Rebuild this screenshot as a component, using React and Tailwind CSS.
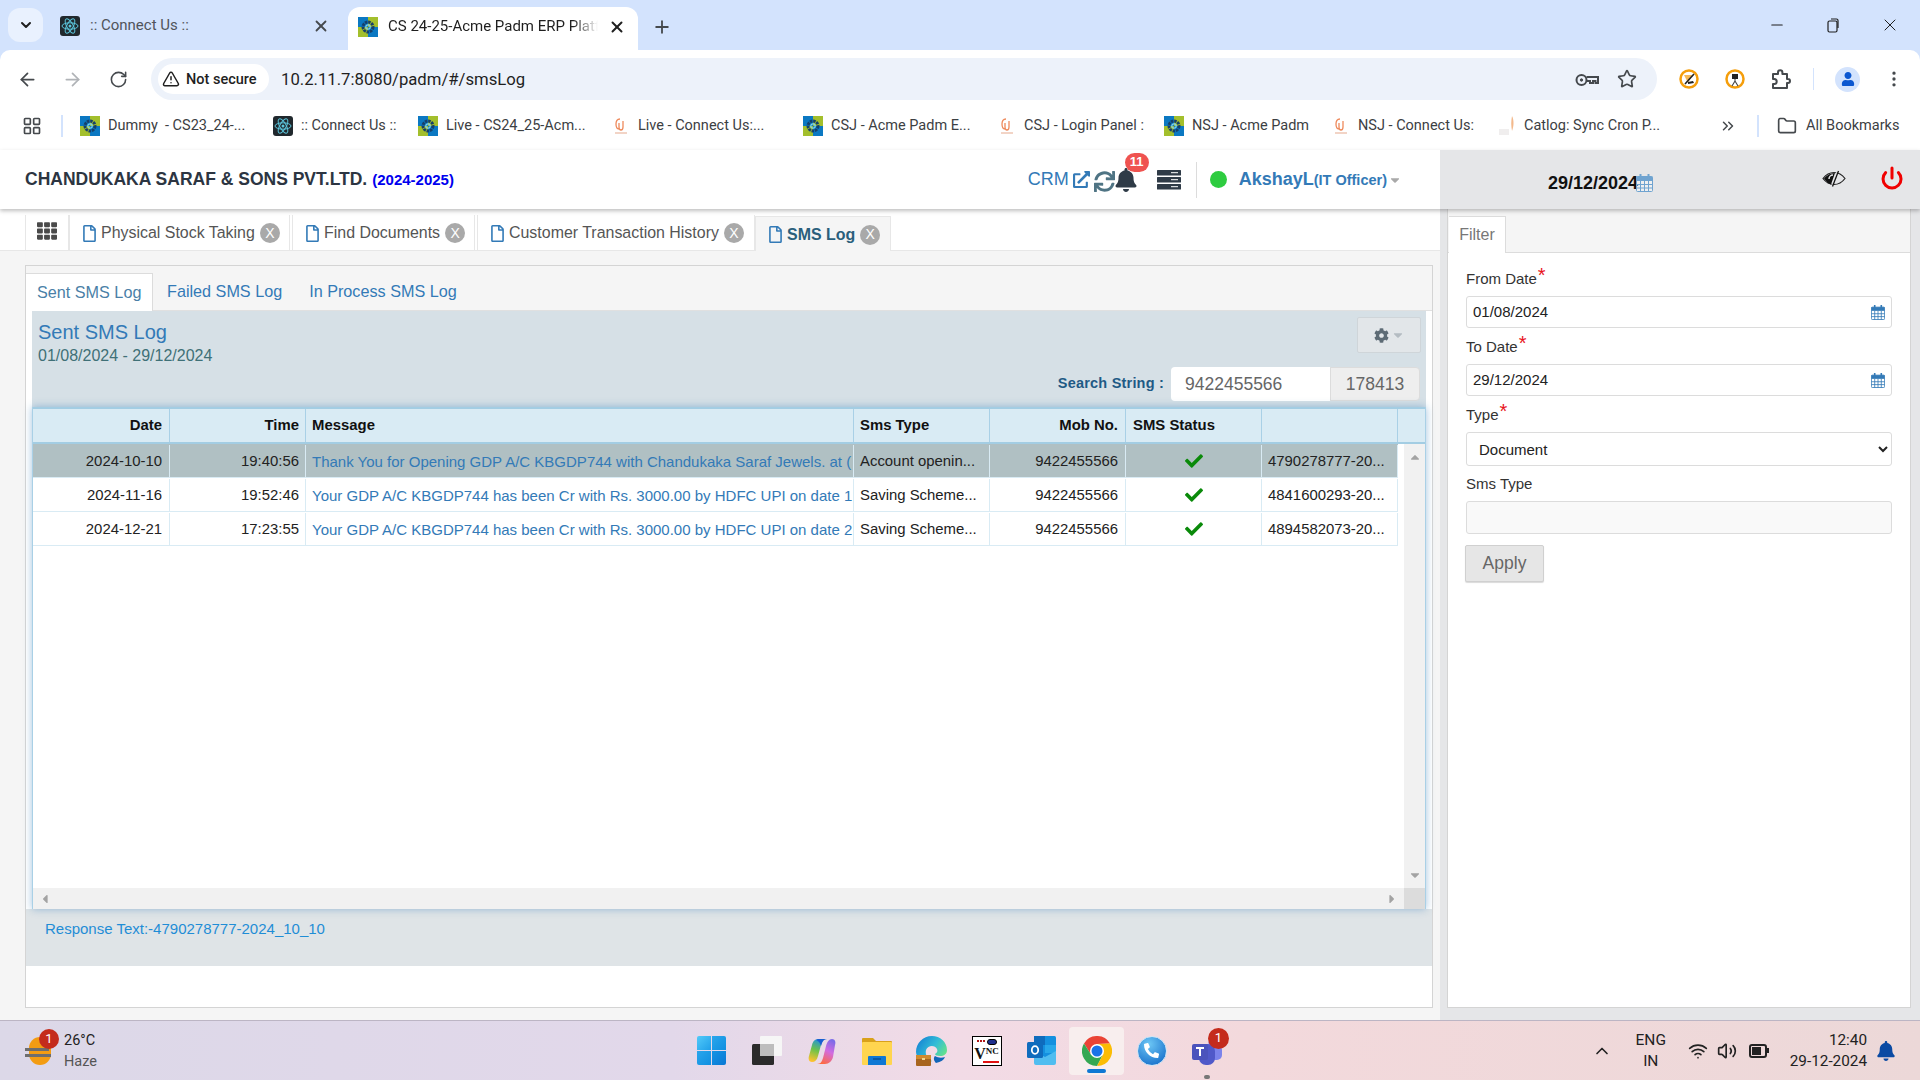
import { ArrowLeft, ArrowRight, RotateCw, X, Plus, ChevronDown, Star, MoreVertical, ChevronsRight, Folder, LayoutGrid, TriangleAlert, Minus, ChevronUp, Wifi, Volume2, Power } from 'lucide-react';
import { FaCheck, FaBell, FaSync, FaExternalLinkAlt, FaTh, FaCog, FaCaretDown, FaRegFile, FaCaretUp, FaCaretLeft, FaCaretRight, FaUser, FaPhoneAlt } from 'react-icons/fa';

function AcmeIcon() {
  return (
    <svg width="20" height="20" viewBox="0 0 20 20" className="shrink-0">
      <rect width="10" height="10" fill="#0b78c2" />
      <rect x="10" width="10" height="10" fill="#a3bf2c" />
      <rect y="10" width="10" height="10" fill="#a3bf2c" />
      <rect x="10" y="10" width="10" height="10" fill="#0b78c2" />
      <circle cx="10" cy="10" r="5" fill="none" stroke="#16406b" strokeWidth="3" strokeDasharray="2.5 0.8" />
      <circle cx="10" cy="10" r="2.2" fill="none" stroke="#7fd0e8" strokeWidth="1.2" />
    </svg>
  );
}

function AtomIcon() {
  return (
    <svg width="20" height="20" viewBox="0 0 20 20" className="shrink-0">
      <rect width="20" height="20" rx="3" fill="#20282d" />
      <g fill="none" stroke="#5cc6dc" strokeWidth="1">
        <ellipse cx="10" cy="10" rx="8" ry="3.2" />
        <ellipse cx="10" cy="10" rx="8" ry="3.2" transform="rotate(60 10 10)" />
        <ellipse cx="10" cy="10" rx="8" ry="3.2" transform="rotate(120 10 10)" />
      </g>
      <circle cx="10" cy="10" r="1.5" fill="#5cc6dc" />
    </svg>
  );
}

function CuIcon() {
  return (
    <svg width="18" height="20" viewBox="0 0 18 20" className="shrink-0">
      <path d="M8 3C5 3 4 5 4 8s1 5 3 5M11 5v6c0 2-1 3-2 3s-2-1-2-3V7" fill="none" stroke="#ee8a5c" strokeWidth="1.3" />
      <path d="M3 17h12" stroke="#e9b7a0" strokeWidth="1.2" />
    </svg>
  );
}

function CatlogIcon() {
  return (
    <svg width="18" height="22" viewBox="0 0 18 22" className="shrink-0">
      <path d="M14 1c2 4 2 10 0 15-1-5-1-10 0-15z" fill="#f3b98c" />
      <rect x="1" y="14" width="10" height="6" fill="#f0eeee" />
    </svg>
  );
}

function CalendarIcon({ color, size = 17 }) {
  return (
    <svg width={size} height={size + 1} viewBox="0 0 17 18" className="shrink-0">
      <rect x="0.5" y="2.5" width="16" height="15" rx="1" fill="#fff" fillOpacity="0.35" stroke={color} />
      <rect x="0.5" y="2.5" width="16" height="4.5" fill={color} />
      <path d="M4.5 0.5v4M12.5 0.5v4" stroke={color} strokeWidth="2" strokeLinecap="round" />
      <path d="M0.5 10.5h16M0.5 14h16M4.5 7v10.5M8.5 7v10.5M12.5 7v10.5" stroke={color} strokeWidth="1" />
    </svg>
  );
}

function Bookmark({ icon, label, className }) {
  return (
    <div className={`flex items-center gap-2 text-[14.5px] text-[#3c4043] whitespace-pre shrink-0 ${className}`}>
      {icon}
      <span>{label}</span>
    </div>
  );
}

function BrowserChrome() {
  return (
    <div className="bg-[#d3e3fd] shrink-0 font-['Roboto',sans-serif]">
      {/* tab strip */}
      <div className="h-[50px] flex items-end pl-2 relative">
        <div className="w-[35px] h-[34px] mb-2 rounded-[12px] bg-[#e9f1fe] flex items-center justify-center">
          <ChevronDown size={16} strokeWidth={3} className="text-[#1f1f1f]" />
        </div>
        <div className="w-[305px] h-[43px] flex items-center pl-[17px] pb-[6px] shrink-0">
          <AtomIcon />
          <span className="ml-[10px] text-[15px] text-[#50545a] flex-1">:: Connect Us ::</span>
          <X size={18} strokeWidth={2.4} className="text-[#45494d] mr-[18px]" />
        </div>
        <div className="w-[290px] h-[43px] bg-white rounded-t-[12px] flex items-center pl-[10px] pb-1 shrink-0">
          <AcmeIcon />
          <span className="ml-[10px] text-[15px] text-[#1f1f1f] w-[210px] whitespace-nowrap [mask-image:linear-gradient(90deg,#000_88%,transparent)]">CS 24-25-Acme Padm ERP Platf</span>
          <X size={18} strokeWidth={2.6} className="text-[#1f1f1f] ml-[10px]" />
        </div>
        <div className="h-[43px] flex items-center pb-1 ml-[14px]">
          <Plus size={20} strokeWidth={2.2} className="text-[#45494d]" />
        </div>
        <div className="ml-auto h-[50px] flex items-center pr-[20px] gap-[39px] text-[#1f1f1f]">
          <Minus size={18} strokeWidth={1.4} />
          <svg width="16" height="16" viewBox="0 0 16 16" fill="none" stroke="#1f1f1f" strokeWidth="1.2">
            <rect x="3" y="4" width="9" height="11" rx="1.5" />
            <path d="M6 2h5.5A1.5 1.5 0 0 1 13 3.5V11" />
          </svg>
          <X size={20} strokeWidth={1.2} />
        </div>
      </div>
      {/* toolbar */}
      <div className="h-[50px] bg-white rounded-t-[10px] flex items-center pt-[8px]">
        <ArrowLeft size={21} className="ml-[17px] text-[#45494d]" />
        <ArrowRight size={21} className="ml-[24px] text-[#b0b3b7]" />
        <RotateCw size={19} className="ml-[26px] text-[#45494d]" />
        <div className="ml-[23px] w-[1506px] h-[42px] rounded-full bg-[#edf2fa] flex items-center pl-[7px] pr-[20px]">
          <div className="w-[111px] h-[30px] rounded-full bg-white flex items-center pl-[4px] gap-[6px]">
            <TriangleAlert size={18} className="text-[#1f1f1f]" />
            <span className="text-[14.5px] font-medium text-[#1f1f1f] whitespace-nowrap mt-[1px]">Not secure</span>
          </div>
          <span className="ml-3 text-[16.7px] text-[#1f1f1f] mt-[2px]">10.2.11.7:8080/padm/#/smsLog</span>
          <svg width="24" height="14" viewBox="0 0 24 14" fill="none" stroke="#45494d" strokeWidth="2" className="ml-auto mt-[1px]">
            <circle cx="6.5" cy="7" r="5" />
            <circle cx="6.5" cy="7" r="1.2" fill="#45494d" strokeWidth="1" />
            <path d="M11.5 4H23v6h-2.5V8H18v2h-3V8h-3.5" />
          </svg>
          <Star size={20} className="ml-[18px] text-[#45494d]" />
        </div>
        <svg width="20" height="20" viewBox="0 0 20 20" className="ml-[22px]">
          <circle cx="10" cy="10" r="8.5" fill="#fff" stroke="#f59e0b" strokeWidth="2.5" />
          <path d="M5 6h8l-4 8z" fill="#f7b955" />
          <path d="M15 5L6 15" stroke="#222" strokeWidth="1.6" />
          <path d="M9 13l5-1 1 2-6 1z" fill="#222" />
        </svg>
        <svg width="20" height="20" viewBox="0 0 20 20" className="ml-[26px]">
          <circle cx="10" cy="10" r="8.5" fill="#fff" stroke="#f59e0b" strokeWidth="2.5" />
          <rect x="7" y="5" width="6" height="5" fill="#222" />
          <path d="M10 10v3M10 12l-3 5M10 12l3 5" stroke="#444" strokeWidth="1.1" />
        </svg>
        <svg width="22" height="22" viewBox="0 0 22 22" fill="none" stroke="#45494d" strokeWidth="2" className="ml-[25px]">
          <path d="M3 6h5V4.5a2.2 2.2 0 0 1 4.4 0V6H17v5h1a2 2 0 0 1 0 4h-1v5H3v-4h1.2a2.5 2.5 0 0 0 0-5H3z" strokeLinejoin="round" />
        </svg>
        <div className="ml-[21px] w-px h-[22px] bg-[#d3e3fd]" />
        <div className="ml-[21px] w-[25px] h-[25px] rounded-full bg-[#d3e3fd] flex items-center justify-center">
          <FaUser size={14} className="text-[#0b57d0]" />
        </div>
        <MoreVertical size={20} className="ml-[24px] text-[#45494d]" />
      </div>
      {/* bookmarks */}
      <div className="h-[50px] bg-white flex items-center pt-[2px]">
        <LayoutGrid size={20} className="ml-[22px] text-[#45494d]" />
        <div className="ml-[19px] mr-[17px] w-[2px] h-[22px] bg-[#d3e3fd]" />
        <Bookmark icon={<AcmeIcon />} label="Dummy  - CS23_24-..." className="w-[193px]" />
        <Bookmark icon={<AtomIcon />} label=":: Connect Us ::" className="w-[145px]" />
        <Bookmark icon={<AcmeIcon />} label="Live - CS24_25-Acm..." className="w-[194px]" />
        <Bookmark icon={<CuIcon />} label="Live - Connect Us:..." className="w-[191px]" />
        <Bookmark icon={<AcmeIcon />} label="CSJ - Acme Padm E..." className="w-[195px]" />
        <Bookmark icon={<CuIcon />} label="CSJ - Login Panel :" className="w-[166px]" />
        <Bookmark icon={<AcmeIcon />} label="NSJ - Acme Padm" className="w-[168px]" />
        <Bookmark icon={<CuIcon />} label="NSJ - Connect Us:" className="w-[166px]" />
        <Bookmark icon={<CatlogIcon />} label="Catlog: Sync Cron P..." className="w-[222px]" />
        <ChevronsRight size={18} className="text-[#45494d] -ml-[1px]" />
        <div className="ml-[20px] w-[2px] h-[22px] bg-[#d3e3fd]" />
        <Folder size={20} className="ml-[18px] text-[#45494d]" />
        <span className="ml-[9px] text-[14.5px] text-[#3c4043] whitespace-nowrap">All Bookmarks</span>
      </div>
    </div>
  );
}

function AppHeader() {
  return (
    <div className="h-[59px] flex shrink-0 relative z-10 shadow-[0_2px_4px_rgba(0,0,0,0.25)]">
      <div className="w-[1440px] bg-white flex items-center pl-[25px]">
        <span className="text-[17.5px] font-bold text-[#2c3542]">CHANDUKAKA SARAF &amp; SONS PVT.LTD.</span>
        <span className="ml-[5px] text-[15px] font-bold text-[#0000ee] mt-[2px]">(2024-2025)</span>
        <span className="ml-auto text-[18px] text-[#337ab7]">CRM</span>
        <FaExternalLinkAlt size={17} className="ml-[4px] text-[#337ab7]" />
        <FaSync size={21} className="ml-[4px] text-[#4f7484] mt-[3px]" />
        <div className="relative -ml-[1px]">
          <FaBell size={24} className="text-[#2f3b47]" />
          <span className="absolute -top-[15px] left-[11px] min-w-[24px] h-[19px] rounded-full bg-[#ef5350] text-white text-[13px] font-bold flex items-center justify-center">11</span>
        </div>
        <svg width="24" height="20" viewBox="0 0 24 20" className="ml-[19px]">
          <rect width="24" height="5.5" rx="0.5" fill="#2f3b47" />
          <rect y="7" width="24" height="5.5" rx="0.5" fill="#2f3b47" />
          <rect y="14" width="24" height="5.5" rx="0.5" fill="#2f3b47" />
          <path d="M14 2.7h7M14 9.7h7M14 16.7h7" stroke="#fff" strokeWidth="1" />
        </svg>
        <div className="ml-[15px] w-px h-[36px] bg-[#dcdcdc]" />
        <div className="ml-[13px] w-[17px] h-[17px] rounded-full bg-[#2ecc40]" />
        <span className="ml-[12px] text-[18px] font-bold text-[#337ab7]">AkshayL</span>
        <span className="text-[14.5px] font-bold text-[#337ab7] mt-[2px]">(IT Officer)</span>
        <FaCaretDown size={14} className="ml-[1px] mr-[38px] text-[#a9a9a9]" />
      </div>
      <div className="flex-1 bg-[#e5e6e8] flex items-center pl-[108px] relative">
        <span className="text-[18px] font-bold text-[#111] mt-[7px]">29/12/2024</span>
        <div className="mt-[7px] -ml-[2px]"><CalendarIcon color="#6fa3d0" /></div>
        <svg width="24" height="17" viewBox="0 0 24 17" fill="none" className="ml-[169px] -mt-[2px]">
          <path d="M1 8.5C4 4.5 8 2.5 12 2.5s8 2 11 6c-3 4-7 6-11 6s-8-2-11-6z" stroke="#222" strokeWidth="1.2" />
          <path d="M9 14.5C6 13.5 3.5 11 2 8.5C4 6 8 3 13 3L9 14.5z" fill="#111" />
          <path d="M7 9a4 4 0 0 1 4-4" stroke="#e5e6e8" strokeWidth="1.5" />
          <path d="M15.5 0.5L9.5 16.5" stroke="#e5e6e8" strokeWidth="1" />
          <path d="M16.5 1L10.5 16.5" stroke="#111" strokeWidth="1.3" />
        </svg>
        <Power size={24} strokeWidth={3} className="ml-[34px] -mt-[3px] text-[#f00000]" />
      </div>
    </div>
  );
}

function PageTab({ label, active, className }) {
  return (
    <div className={`h-[35px] flex items-center pl-[11px] pt-[1px] text-[15.95px] whitespace-nowrap border-l border-r border-[#e7e7e7] shrink-0 ${active ? 'bg-[#f5f5f5] font-bold text-[#2a5f7c] border-t' : 'bg-white text-[#555]'} ${className}`}>
      <FaRegFile size={17} className="text-[#337ab7] mr-[3px]" />
      <span>{label}</span>
      <span className="ml-[5px] w-[20px] h-[20px] rounded-full bg-[#a9a9a9] text-white text-[14px] font-normal flex items-center justify-center">X</span>
    </div>
  );
}

const rows = [
  { date: '2024-10-10', time: '19:40:56', msg: 'Thank You for Opening GDP A/C KBGDP744 with Chandukaka Saraf Jewels. at (', type: 'Account openin...', id: '4790278777-20...', on: true },
  { date: '2024-11-16', time: '19:52:46', msg: 'Your GDP A/C KBGDP744 has been Cr with Rs. 3000.00 by HDFC UPI on date 1', type: 'Saving Scheme...', id: '4841600293-20...' },
  { date: '2024-12-21', time: '17:23:55', msg: 'Your GDP A/C KBGDP744 has been Cr with Rs. 3000.00 by HDFC UPI on date 2', type: 'Saving Scheme...', id: '4894582073-20...' },
];

function SmsTable() {
  return (
    <div className="bg-white border-x border-[#a9d0e6] shadow-[0_0_8px_rgba(51,122,183,0.45)] flex-1 flex flex-col min-h-0 relative z-[1]">
      <div className="h-[37px] bg-[#d9ebf4] border-y-2 border-[#a3cde3] grid grid-cols-[137px_136px_548px_136px_136px_136px_136px_1fr] items-stretch text-[14.9px] font-bold text-[#111] shrink-0">
        <div className="border-r border-[#a9d0e6] flex items-center justify-end pr-[7px]">Date</div>
        <div className="border-r border-[#a9d0e6] flex items-center justify-end pr-[6px]">Time</div>
        <div className="border-r border-[#a9d0e6] flex items-center pl-[6px]">Message</div>
        <div className="border-r border-[#a9d0e6] flex items-center pl-[6px]">Sms Type</div>
        <div className="border-r border-[#a9d0e6] flex items-center justify-end pr-[7px]">Mob No.</div>
        <div className="border-r border-[#a9d0e6] flex items-center pl-[7px]">SMS Status</div>
        <div className="border-r border-[#a9d0e6]" />
        <div />
      </div>
      <div className="flex-1 flex min-h-0">
        <div className="w-[1365px]">
          {rows.map((r) => (
            <div key={r.id} className={`h-[34px] pt-[1px] grid grid-cols-[137px_136px_548px_136px_136px_136px_136px] items-stretch text-[14.9px] text-[#222] border-b border-[#d9ebf4] ${r.on ? 'bg-[#b0c0c3]' : 'bg-white'}`}>
              <div className="border-r border-[#d9ebf4] flex items-center justify-end pr-[7px]">{r.date}</div>
              <div className="border-r border-[#d9ebf4] flex items-center justify-end pr-[6px]">{r.time}</div>
              <div className="border-r border-[#d9ebf4] flex items-center pl-[6px] pt-[3px] text-[15px] text-[#337ab7] overflow-hidden whitespace-nowrap">{r.msg}</div>
              <div className="border-r border-[#d9ebf4] flex items-center pl-[6px] whitespace-nowrap">{r.type}</div>
              <div className="border-r border-[#d9ebf4] flex items-center justify-end pr-[7px]">9422455566</div>
              <div className="border-r border-[#d9ebf4] flex items-center justify-center"><FaCheck size={18} className="text-[#0a8a0a]" /></div>
              <div className="border-r border-[#d9ebf4] flex items-center pl-[6px] whitespace-nowrap">{r.id}</div>
            </div>
          ))}
        </div>
        <div className="ml-auto w-[21px] bg-[#f1f1f1] flex flex-col items-center justify-between py-[6px] text-[#a3a3a3]">
          <FaCaretUp size={14} />
          <FaCaretDown size={14} />
        </div>
      </div>
      <div className="h-[21px] flex items-center bg-[#f1f1f1] text-[#a3a3a3] shrink-0">
        <div className="flex-1 flex items-center justify-between px-[5px]">
          <FaCaretLeft size={14} />
          <FaCaretRight size={14} />
        </div>
        <div className="w-[21px] h-full bg-[#dcdcdc]" />
      </div>
    </div>
  );
}

function SmsLogPanel() {
  return (
    <div className="ml-[25px] mt-[14px] w-[1408px] h-[743px] border border-[#d4d4d4] bg-white flex flex-col">
      <div className="h-[45px] bg-[#f5f5f5] border-b border-[#e0e0e0] flex items-end shrink-0 text-[16.2px] text-[#337ab7] whitespace-nowrap">
        <div className="h-[38px] w-[127px] -mb-px bg-white border-t border-r border-[#dcdcdc] flex items-center pl-[11px] text-[#4a7fa7]">Sent SMS Log</div>
        <div className="h-[38px] flex items-center pl-[14px] pt-[1px]">Failed SMS Log</div>
        <div className="h-[38px] flex items-center pl-[27px] pt-[1px]">In Process SMS Log</div>
      </div>
      <div className="flex-1 flex flex-col pl-[6px] pr-[6px] min-h-0">
        <div className="h-[96px] bg-[#d6e0e6] flex shrink-0 px-[6px]">
          <div className="pt-[8px]">
            <div className="text-[20px] leading-[26px] text-[#337ab7]">Sent SMS Log</div>
            <div className="text-[16px] leading-[20px] text-[#3f7077] mt-[1px]">01/08/2024 - 29/12/2024</div>
          </div>
          <div className="ml-auto flex flex-col items-end pt-[6px]">
            <div className="w-[64px] h-[36px] bg-[#e2e6e9] border border-[#cfd5d9] rounded-[2px] flex items-center justify-center gap-[2px] mr-[-1px]">
              <FaCog size={15} className="text-[#5d6b75]" />
              <FaCaretDown size={14} className="text-[#b4bcc2]" />
            </div>
            <div className="mt-[14px] flex items-center">
              <span className="text-[14.5px] font-bold text-[#1f5a85] mr-[7px] tracking-[0.2px]">Search String :</span>
              <input readOnly value="9422455566" className="w-[159px] h-[34px] bg-white rounded-l-[4px] pl-[14px] text-[17.5px] text-[#666] outline-none" />
              <div className="w-[90px] h-[34px] bg-[#eeeeee] border border-[#dcdcdc] rounded-r-[4px] flex items-center justify-center text-[17.5px] text-[#666]">178413</div>
            </div>
          </div>
        </div>
        <SmsTable />
      </div>
      <div className="h-[57px] bg-[#dfe4e7] pl-[19px] pt-[9px] text-[15px] text-[#1f8dd6] shrink-0">Response Text:-4790278777-2024_10_10</div>
      <div className="h-[41px] shrink-0" />
    </div>
  );
}

function Field({ label, required, className = '', children }) {
  return (
    <div className={className}>
      <div className="h-[28px] text-[15px] text-[#333] flex items-start leading-[21px]">
        {label}
        {required && <span className="text-[#e8141c] text-[20px] leading-[20px] ml-[1px] -mt-[3px]">*</span>}
      </div>
      {children}
    </div>
  );
}

function DateInput({ value, className }) {
  return (
    <div className={`w-[426px] bg-white border border-[#dcdcdc] rounded-[3px] flex items-center pl-[6px] pr-[6px] ${className}`}>
      <input readOnly value={value} className="flex-1 min-w-0 text-[15px] text-[#222] outline-none" />
      <CalendarIcon color="#337ab7" size={14} />
    </div>
  );
}

function FilterPanel() {
  return (
    <div className="flex-1 bg-[#e5e6e8] flex flex-col pb-[12px] pl-[7px] pr-[9px]">
      <div className="flex-1 bg-white border-x border-b border-[#d4d4d4] flex flex-col">
        <div className="h-[44px] bg-[#f5f5f5] border-b border-[#dcdcdc] flex items-end pl-[1px] shrink-0">
          <div className="h-[37px] w-[57px] -mb-px bg-white border-t border-r border-[#dcdcdc] flex items-center justify-center text-[16px] text-[#777]">Filter</div>
        </div>
        <div className="pl-[18px] pt-[15px] flex flex-col gap-[8px]">
          <Field label="From Date" required>
            <DateInput value="01/08/2024" className="h-[32px]" />
          </Field>
          <Field label="To Date" required>
            <DateInput value="29/12/2024" className="h-[32px]" />
          </Field>
          <Field label="Type" required>
            <select defaultValue="Document" className="w-[426px] h-[34px] bg-white border border-[#dcdcdc] rounded-[3px] pl-[8px] text-[15px] text-[#222] outline-none">
              <option>Document</option>
            </select>
          </Field>
          <Field label="Sms Type" className="-mt-[1px]">
            <input readOnly className="w-[426px] h-[33px] bg-[#f9f9f9] border border-[#dcdcdc] rounded-[3px] outline-none" />
          </Field>
          <button className="-ml-[1px] mt-[3px] w-[79px] h-[37px] bg-[#e6e6e6] border border-[#d0d0d0] rounded-[2px] text-[17.5px] text-[#666] shadow-[0_1px_1px_rgba(0,0,0,0.15)]">Apply</button>
        </div>
      </div>
    </div>
  );
}

function TaskIcon({ children, className = '' }) {
  return <div className={`w-[55px] h-[48px] flex items-center justify-center relative shrink-0 ${className}`}>{children}</div>;
}

function Taskbar() {
  return (
    <div className="h-[60px] shrink-0 border-t border-[#bcb5c4] bg-[linear-gradient(90deg,#dcd8e8_0%,#e2d8ea_35%,#f2dbe6_50%,#f3d9dc_65%,#ecd8d8_100%)] flex items-center relative font-['Roboto',sans-serif]">
      <div className="w-[684px] flex items-center pl-[25px] shrink-0">
        <div className="relative w-[30px] h-[30px] flex items-center justify-center">
          <div className="w-[22px] h-[28px] rounded-full bg-[#f39c12]" />
          <div className="absolute left-0 top-[12px] w-[26px] flex flex-col gap-[3px]">
            <div className="h-[3px] w-[24px] bg-[#6e6e6e]" />
            <div className="h-[3px] w-[26px] bg-[#6e6e6e]" />
          </div>
          <span className="absolute -top-[7px] left-[14px] w-[20px] h-[20px] rounded-full bg-[#c42b1c] text-white text-[13px] flex items-center justify-center">1</span>
        </div>
        <div className="ml-[9px] text-[14.5px] leading-[21px] text-[#222]">
          <div>26°C</div>
          <div className="text-[#555]">Haze</div>
        </div>
      </div>
      <div className="flex items-center">
        <TaskIcon>
          <div className="grid grid-cols-2 gap-[1px] w-[29px] h-[29px]">
            <div className="rounded-tl-[2px] bg-[linear-gradient(135deg,#52caf9,#1f9fe9)]" />
            <div className="rounded-tr-[2px] bg-[linear-gradient(135deg,#2aa6ec,#108fe0)]" />
            <div className="rounded-bl-[2px] bg-[linear-gradient(135deg,#2aa6ec,#108fe0)]" />
            <div className="rounded-br-[2px] bg-[linear-gradient(135deg,#1594e4,#0a78d4)]" />
          </div>
        </TaskIcon>
        <TaskIcon>
          <svg width="30" height="29" viewBox="0 0 30 29">
            <rect y="8" width="22" height="21" rx="1.5" fill="#2b2b2b" />
            <rect x="8" width="22" height="20" rx="1" fill="#f6f6f6" />
            <rect x="8" y="8" width="14" height="12" fill="#bdbdbd" />
          </svg>
        </TaskIcon>
        <TaskIcon>
          <svg width="30" height="30" viewBox="0 0 30 30">
            <defs>
              <linearGradient id="cpa" x1="0.6" y1="0" x2="0.3" y2="1">
                <stop offset="0" stopColor="#1f8fe6" />
                <stop offset="0.5" stopColor="#6cc24a" />
                <stop offset="1" stopColor="#ffc22e" />
              </linearGradient>
              <linearGradient id="cpb" x1="0.7" y1="0" x2="0.3" y2="1">
                <stop offset="0" stopColor="#7a6be8" />
                <stop offset="0.45" stopColor="#d26be0" />
                <stop offset="1" stopColor="#ff6a3c" />
              </linearGradient>
            </defs>
            <path d="M12 3h8c-4 0-5 3-6 6l-3 11c-1 4-3 6-6 6-3 0-4-3-3-6L5 9c1-4 3-6 7-6z" fill="url(#cpa)" />
            <path d="M18 28h-8c4 0 5-3 6-6l3-12c1-4 3-7 6-7 3 0 4 3 3 6l-2 12c-1 4-4 7-8 7z" fill="url(#cpb)" />
            <path d="M13 3h7c-3 0-4 2-5 4l-1 3c-1-3-2-5-5-6 1-.6 2-1 4-1z" fill="#1a5fd0" />
          </svg>
        </TaskIcon>
        <TaskIcon>
          <svg width="30" height="28" viewBox="0 0 30 28">
            <path d="M1 1h10l3 3h15a1 1 0 0 1 1 1v4H0V2a1 1 0 0 1 1-1z" fill="#d9a11a" />
            <rect y="5" width="30" height="23" rx="1" fill="#ffd54f" />
            <path d="M6 20a1 1 0 0 1 1-1h16a1 1 0 0 1 1 1v8H6z" fill="#0f78d4" />
            <path d="M11 22h8" stroke="#0a4f96" strokeWidth="1.5" />
          </svg>
        </TaskIcon>
        <TaskIcon>
          <svg width="31" height="30" viewBox="0 0 31 30">
            <defs>
              <linearGradient id="edg" x1="0" y1="0" x2="1" y2="0.6">
                <stop offset="0" stopColor="#0f78d4" />
                <stop offset="0.6" stopColor="#32bdd6" />
                <stop offset="1" stopColor="#66e28a" />
              </linearGradient>
            </defs>
            <path d="M0 16C0 7 7 0 16 0c8 0 15 6 15 14 0 4-3 6-7 6-3 0-5-1-5-2 2-1 3-3 2-5-2-4-9-4-11 1-1 4 1 9 6 11-3 2-8 1-11-1C2 22 0 19 0 16z" fill="url(#edg)" />
            <path d="M20 27c5-1 8-3 9-6-3 1-7 1-10-1-2 2-1 5 1 7z" fill="#1265b8" />
            <rect y="19" width="15" height="11" rx="1" fill="#a8651f" />
            <rect y="19" width="15" height="4" fill="#d18a2e" />
            <rect x="6" y="22" width="3" height="2" fill="#f3d68a" />
          </svg>
        </TaskIcon>
        <TaskIcon>
          <div className="w-[30px] h-[30px] bg-white border border-black flex flex-col items-center justify-end font-['Liberation_Serif',serif] font-bold text-[#111]">
            <div className="flex items-center gap-[2px] h-[7px]">
              <div className="w-[8px] h-[4px] border-t-2 border-dotted border-[#b01818]" />
              <div className="w-[10px] h-[6px] rounded-full bg-[#1d2f8f] border border-black" />
            </div>
            <div className="flex items-start leading-none">
              <span className="text-[16px] leading-[15px]">V</span>
              <span className="text-[9px] leading-[11px]">NC</span>
            </div>
            <div className="w-[16px] h-[2px] bg-[#e01010] mb-[2px] ml-[8px]" />
          </div>
        </TaskIcon>
        <TaskIcon>
          <svg width="30" height="29" viewBox="0 0 30 29">
            <rect x="7" width="22" height="27" rx="1.5" fill="#1490df" />
            <path d="M7 0h11v9H7z" fill="#0f6cbd" />
            <path d="M18 9h11v8H18z" fill="#28a8ea" />
            <path d="M7 15l11 6 11-6v12a2 2 0 0 1-2 2H9a2 2 0 0 1-2-2z" fill="#50bdf0" />
            <rect y="6" width="16" height="16" rx="1.5" fill="#0f6cbd" />
            <ellipse cx="8" cy="14" rx="3.2" ry="3.8" fill="none" stroke="#fff" strokeWidth="1.8" />
          </svg>
        </TaskIcon>
        <TaskIcon className="bg-[#f8eeee] rounded-[4px]">
          <svg width="30" height="30" viewBox="0 0 30 30">
            <path d="M2 7.5A15 15 0 0 1 28 7.5L15 8 9 18.5z" fill="#ea4335" />
            <path d="M2 7.5A15 15 0 0 0 15 30L21 18.5 9 18.5z" fill="#34a853" />
            <path d="M28 7.5A15 15 0 0 1 15 30L21 18.5 15 8z" fill="#fbbc04" />
            <circle cx="15" cy="15" r="7" fill="#fff" />
            <circle cx="15" cy="15" r="5.5" fill="#1a73e8" />
          </svg>
          <div className="absolute bottom-[2px] left-[18px] w-[19px] h-[4px] rounded-full bg-[#0f78d4]" />
        </TaskIcon>
        <TaskIcon>
          <div className="w-[30px] h-[30px] rounded-full border border-[#cfe6f7] bg-[radial-gradient(circle_at_40%_25%,#6cc6f5,#0a62c4)] flex items-center justify-center">
            <FaPhoneAlt size={15} className="text-white" />
          </div>
        </TaskIcon>
        <TaskIcon>
          <svg width="30" height="28" viewBox="0 0 30 28">
            <circle cx="21" cy="6" r="4.5" fill="#7b83eb" />
            <rect x="17" y="8" width="13" height="15" rx="5" fill="#7b83eb" />
            <rect x="7" y="7" width="16" height="21" rx="7" fill="#5059c9" />
            <rect y="7" width="16" height="16" rx="2" fill="#4b53bc" />
            <path d="M4 11h8M8 11v8" stroke="#fff" strokeWidth="2" />
          </svg>
          <span className="absolute top-[1px] left-[29px] w-[21px] h-[21px] rounded-full bg-[#c42b1c] text-white text-[13px] flex items-center justify-center">1</span>
          <div className="absolute -bottom-[4px] left-[25px] w-[6px] h-[4px] rounded-full bg-[#777]" />
        </TaskIcon>
      </div>
      <div className="ml-auto flex items-center text-[#222] pr-[24px]">
        <ChevronUp size={20} />
        <div className="ml-[23px] w-[32px] text-center text-[15.5px] leading-[21px]"><div>ENG</div><div>IN</div></div>
        <Wifi size={20} className="ml-[21px]" />
        <Volume2 size={20} className="ml-[9px]" />
        <div className="ml-[12px] flex items-center">
          <div className="w-[18px] h-[14px] border-2 border-[#222] rounded-[3px] p-[1px]"><div className="w-[9px] h-full bg-[#222]" /></div>
          <div className="w-[2px] h-[5px] bg-[#222]" />
        </div>
        <div className="ml-[21px] text-right text-[15.3px] leading-[21px]"><div>12:40</div><div>29-12-2024</div></div>
        <FaBell size={20} className="ml-[9px] text-[#0a4aa3]" />
      </div>
    </div>
  );
}

export default function App() {
  return (
    <div className="w-[1920px] h-[1080px] overflow-hidden flex flex-col font-['Liberation_Sans',Arial,sans-serif] bg-[#f5f5f5]">
      <BrowserChrome />
      <AppHeader />
      <div className="flex-1 flex min-h-0">
        <div className="w-[1440px] shrink-0 flex flex-col">
          {/* open page tabs */}
          <div className="h-[42px] bg-white border-b border-[#e7e7e7] flex items-end pl-[25px] shrink-0">
            <div className="h-[35px] w-[44px] flex items-center justify-center border-x border-[#e7e7e7]">
              <FaTh size={20} className="text-[#4a4a4a] -mt-[4px]" />
            </div>
            <PageTab label="Physical Stock Taking" className="w-[221px]" />
            <div className="w-[2px]" />
            <PageTab label="Find Documents" className="w-[183px]" />
            <div className="w-[2px]" />
            <PageTab label="Customer Transaction History" className="w-[278px]" />
            <PageTab label="SMS Log" active className="w-[136px] -mb-px" />
          </div>
          <SmsLogPanel />
        </div>
        <FilterPanel />
      </div>
      <Taskbar />
    </div>
  );
}
